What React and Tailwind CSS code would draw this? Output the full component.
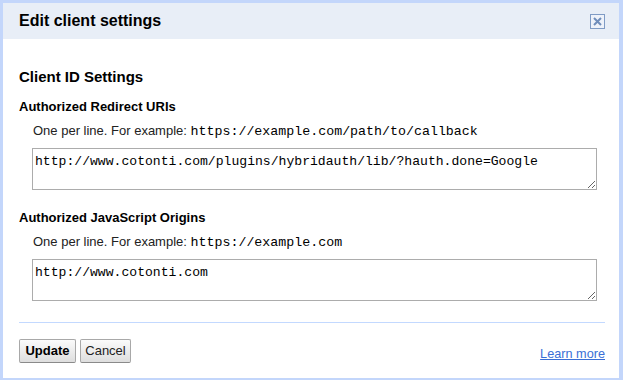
import React from "react";

const sans = { fontFamily: '"Liberation Sans", Arial, sans-serif' };
const mono = { fontFamily: '"Liberation Mono", "Courier New", monospace' };

export default function App() {
  return (
    <div
      className="w-[623px] h-[380px] bg-white border-l-[3px] border-t-[3px] border-r-[4px] border-b-[2px] border-[#c3d6fb] flex flex-col text-black"
      style={sans}
    >
      <div className="h-[36px] bg-[#e8eef7] flex items-center justify-between pl-[16px] pr-[14px] shrink-0">
        <div className="text-[16px] font-bold leading-[18px] text-black">Edit client settings</div>
        <svg width="15" height="15" viewBox="0 0 15 15" className="block">
          <rect x="0.5" y="0.5" width="14" height="14" fill="#eef2fa" stroke="#7f9bc5" />
          <path d="M4 4 L11 11 M11 4 L4 11" stroke="#6f8dbb" strokeWidth="2" />
        </svg>
      </div>

      <div className="flex flex-col pl-[16px] pr-[14px] pt-[29px]">
        <div className="text-[15px] font-bold leading-[18px]">Client ID Settings</div>

        <div className="mt-[13px] text-[13px] font-bold leading-[16px]">Authorized Redirect URIs</div>
        <div className="mt-[8px] ml-[14px] h-[16px] flex items-baseline text-[13px] leading-[16px] text-[#222] whitespace-pre">
          <span>One per line. For example: </span>
          <span className="text-[13.3px] leading-[16px] text-black" style={mono}>
            https://example.com/path/to/callback
          </span>
        </div>
        <textarea
          readOnly
          defaultValue="http://www.cotonti.com/plugins/hybridauth/lib/?hauth.done=Google"
          className="mt-[9px] ml-[13px] w-[565px] h-[42px] border border-[#acacac] pt-[5px] pl-[2px] pr-[2px] text-[13.1px] leading-[15px] text-black outline-none bg-white"
          style={mono}
        />

        <div className="mt-[20px] text-[13px] font-bold leading-[16px]">Authorized JavaScript Origins</div>
        <div className="mt-[8px] ml-[14px] h-[16px] flex items-baseline text-[13px] leading-[16px] text-[#222] whitespace-pre">
          <span>One per line. For example: </span>
          <span className="text-[13.3px] leading-[16px] text-black" style={mono}>
            https://example.com
          </span>
        </div>
        <textarea
          readOnly
          defaultValue="http://www.cotonti.com"
          className="mt-[9px] ml-[13px] w-[565px] h-[42px] border border-[#acacac] pt-[5px] pl-[2px] pr-[2px] text-[13.1px] leading-[15px] text-black outline-none bg-white"
          style={mono}
        />

        <div className="mt-[21px] h-px bg-[#c3d9ff]" />

        <div className="mt-[16px] flex items-start justify-between">
          <div className="flex gap-[4px]">
            <button className="h-[24px] w-[57px] border border-[#a8a8a8] border-b-[#8a8a8a] rounded-[2px] bg-gradient-to-b from-[#fbfbfb] to-[#dedede] text-[13px] font-bold leading-[16px] text-black">
              Update
            </button>
            <button className="h-[24px] w-[51px] border border-[#a8a8a8] border-b-[#8a8a8a] rounded-[2px] bg-gradient-to-b from-[#fbfbfb] to-[#dedede] text-[13px] leading-[16px] text-[#222]">
              Cancel
            </button>
          </div>
          <a href="#" className="mt-[7px] text-[12.7px] leading-[16px] text-[#3a6fd6] underline">
            Learn more
          </a>
        </div>
      </div>
    </div>
  );
}
